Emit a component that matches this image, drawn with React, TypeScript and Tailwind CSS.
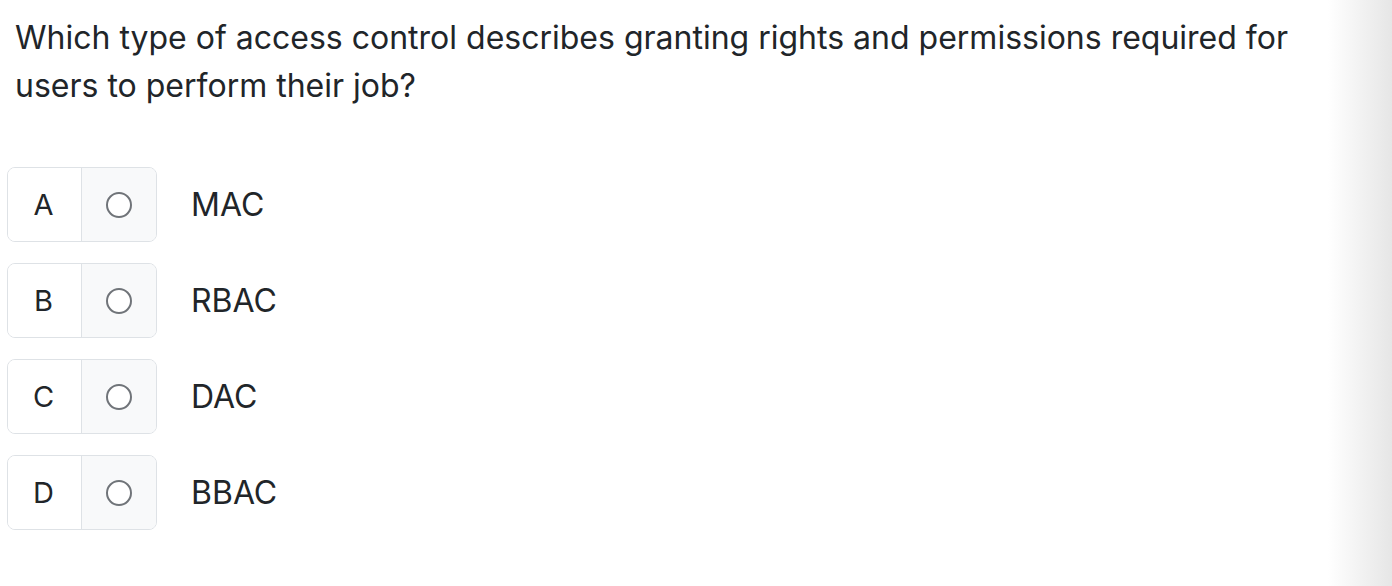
const options = [
  { letter: 'A', text: 'MAC' },
  { letter: 'B', text: 'RBAC' },
  { letter: 'C', text: 'DAC' },
  { letter: 'D', text: 'BBAC' },
]

export default function App() {
  return (
    <div className="flex h-[586px] w-full bg-white font-['Inter',sans-serif] text-[#212529]">
      <div className="flex-1 pl-[15px] pt-[14px]">
        <p className="text-[32px] leading-[48px] pr-[40px]">
          Which type of access control describes granting rights and permissions required for users to perform their job?
        </p>
        <div className="mt-[57px] ml-[-8px] flex flex-col gap-[21px]">
          {options.map((o) => (
            <div key={o.letter} className="flex items-center">
              <div className="flex h-[75px] w-[150px] overflow-hidden rounded-lg border-[1.5px] border-[#dee2e6]">
                <div className="flex w-[73px] items-center justify-center bg-white pr-[2px] text-[29px]">
                  {o.letter}
                </div>
                <div className="flex flex-1 items-center justify-center border-l-[1.5px] border-[#dee2e6] bg-[#f8f9fa]">
                  <span className="block h-[26px] w-[26px] rounded-full border-2 border-[#707479] bg-white" />
                </div>
              </div>
              <span className="ml-[34px] text-[32px]">{o.text}</span>
            </div>
          ))}
        </div>
      </div>
      <div className="w-[64px] bg-gradient-to-r from-white to-[#e6e6e6]" />
    </div>
  )
}
